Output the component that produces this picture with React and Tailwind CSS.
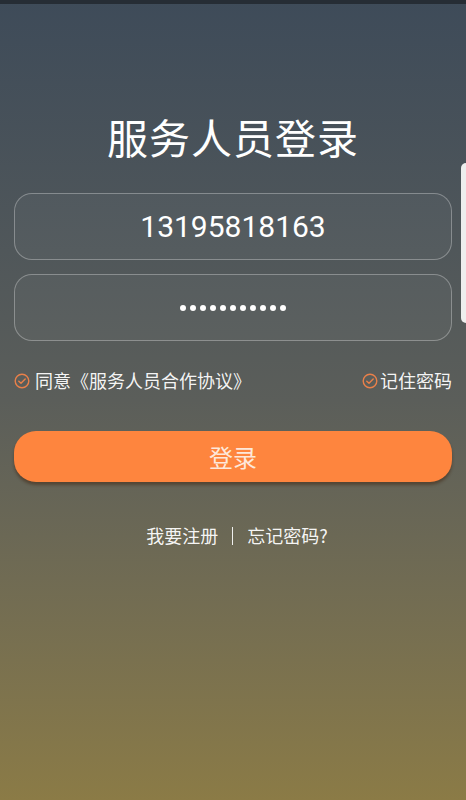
import { useState } from "react"

function CheckCircle() {
  return (
    <svg width="16" height="16" viewBox="0 0 16 16" fill="none">
      <circle cx="8" cy="8" r="6.8" stroke="#e9804a" strokeWidth="1.4" />
      <path d="M4.8 8.2l2.2 2.1 4.2-4.4" stroke="#e9804a" strokeWidth="1.4" strokeLinecap="round" strokeLinejoin="round" />
    </svg>
  )
}

export default function App() {
  const [phone, setPhone] = useState("13195818163")
  const dots = Array.from({ length: 11 })

  return (
    <div
      className="relative w-[466px] h-[800px] overflow-hidden bg-gradient-to-b from-[#3e4b59] via-[#5b5e5a] to-[#8b7b46] text-white"
      style={{ fontFamily: '"Noto Sans CJK SC", "Noto Sans", Roboto, sans-serif' }}
    >
      <div className="h-[4px] bg-[#262d35]" />
      <div className="absolute right-0 top-[163px] w-[5px] h-[160px] rounded-l-md bg-white/90" />

      <div className="px-[14px]">
        <h1 className="mt-[102px] text-center text-[41px] leading-[60px] tracking-[1px]">服务人员登录</h1>

        <div className="mt-[27px] flex flex-col gap-[14px]">
          <input
            value={phone}
            onChange={(e) => setPhone(e.target.value)}
            className="h-[67px] w-full rounded-[18px] border border-white/30 bg-white/[0.03] text-center text-[30px] outline-none"
            style={{ fontFamily: 'Roboto, sans-serif' }}
          />
          <div className="h-[67px] w-full rounded-[18px] border border-white/30 bg-white/[0.03] flex items-center justify-center gap-[4px]">
            {dots.map((_, i) => (
              <span key={i} className="w-[6px] h-[6px] rounded-full bg-white" />
            ))}
          </div>
        </div>

        <div className="mt-[26px] flex items-center justify-between text-[18px] text-white/95">
          <div className="flex items-center gap-[5px]">
            <CheckCircle />
            <span>同意《服务人员合作协议》</span>
          </div>
          <div className="flex items-center gap-[2px]">
            <CheckCircle />
            <span>记住密码</span>
          </div>
        </div>

        <button className="mt-[37px] h-[51px] w-full rounded-[22px] bg-[#fe853e] text-[24px] text-[#fde8da] shadow-[0_3px_3px_rgba(60,30,10,0.45)]">
          登录
        </button>

        <div className="mt-[40px] pl-[8px] flex items-center justify-center text-[18px] text-white/95">
          <span>我要注册</span>
          <span className="mx-[14px] h-[18px] w-px bg-white/90" />
          <span>忘记密码?</span>
        </div>
      </div>
    </div>
  )
}
